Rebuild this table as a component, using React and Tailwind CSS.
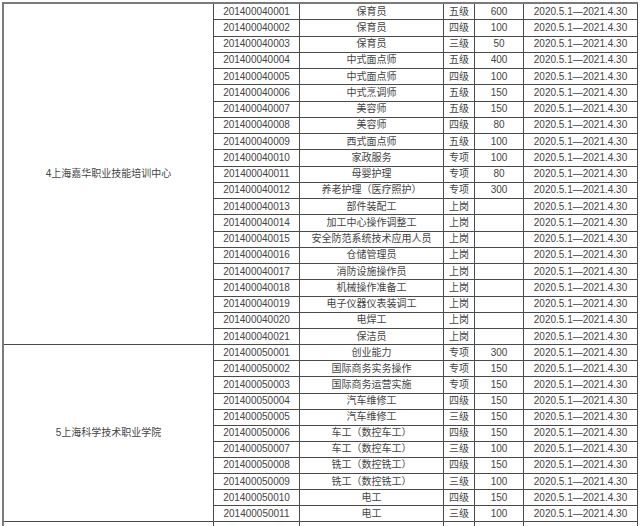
const s4 = [
  ["201400040001", "保育员", "五级", "600"],
  ["201400040002", "保育员", "四级", "100"],
  ["201400040003", "保育员", "三级", "50"],
  ["201400040004", "中式面点师", "五级", "400"],
  ["201400040005", "中式面点师", "四级", "100"],
  ["201400040006", "中式烹调师", "五级", "150"],
  ["201400040007", "美容师", "五级", "150"],
  ["201400040008", "美容师", "四级", "80"],
  ["201400040009", "西式面点师", "五级", "100"],
  ["201400040010", "家政服务", "专项", "100"],
  ["201400040011", "母婴护理", "专项", "80"],
  ["201400040012", "养老护理（医疗照护）", "专项", "300"],
  ["201400040013", "部件装配工", "上岗", ""],
  ["201400040014", "加工中心操作调整工", "上岗", ""],
  ["201400040015", "安全防范系统技术应用人员", "上岗", ""],
  ["201400040016", "仓储管理员", "上岗", ""],
  ["201400040017", "消防设施操作员", "上岗", ""],
  ["201400040018", "机械操作准备工", "上岗", ""],
  ["201400040019", "电子仪器仪表装调工", "上岗", ""],
  ["201400040020", "电焊工", "上岗", ""],
  ["201400040021", "保洁员", "上岗", ""],
];

const s5 = [
  ["201400050001", "创业能力", "专项", "300"],
  ["201400050002", "国际商务实务操作", "专项", "150"],
  ["201400050003", "国际商务运营实施", "专项", "150"],
  ["201400050004", "汽车维修工", "四级", "150"],
  ["201400050005", "汽车维修工", "三级", "150"],
  ["201400050006", "车工（数控车工）", "四级", "150"],
  ["201400050007", "车工（数控车工）", "三级", "100"],
  ["201400050008", "铣工（数控铣工）", "四级", "150"],
  ["201400050009", "铣工（数控铣工）", "三级", "100"],
  ["201400050010", "电工", "四级", "150"],
  ["201400050011", "电工", "三级", "100"],
];

const DATE = "2020.5.1—2021.4.30";

function Row({ r, h }) {
  return (
    <div className={`flex ${h} border-b border-[#4a4a4a]`}>
      <div className="w-[86px] shrink-0 border-r border-[#4a4a4a] flex items-center justify-center">{r[0]}</div>
      <div className="w-[144px] shrink-0 border-r border-[#4a4a4a] flex items-center justify-center whitespace-nowrap">{r[1]}</div>
      <div className="w-[31px] shrink-0 border-r border-[#4a4a4a] flex items-center justify-center">{r[2]}</div>
      <div className="w-[49px] shrink-0 border-r border-[#4a4a4a] flex items-center justify-center">{r[3]}</div>
      <div className="w-[114px] shrink-0 border-r border-[#4a4a4a] flex items-center justify-center whitespace-nowrap">{r[0] ? DATE : ""}</div>
    </div>
  );
}

function Section({ name, rows, h }) {
  return (
    <div className="flex">
      <div className="w-[210px] shrink-0 border-r border-b border-[#4a4a4a] flex items-center justify-center">
        {name}
      </div>
      <div className="flex flex-col">
        {rows.map((r, i) => (
          <Row key={r[0] || i} r={r} h={h} />
        ))}
      </div>
    </div>
  );
}

export default function App() {
  return (
    <div className="w-[640px] h-[526px] overflow-hidden bg-white">
      <div
        className="ml-[2px] mt-[2px] w-[636px] border-l-2 border-t-2 border-[#7a7a7a] text-[10px] leading-none text-[#444]"
        style={{ fontFamily: '"Liberation Sans", "Noto Sans CJK SC", sans-serif' }}
      >
        <Section name="4上海嘉华职业技能培训中心" rows={s4} h="h-[16.25px]" />
        <Section name="5上海科学技术职业学院" rows={s5} h="h-[16.1px]" />
        <Section name="" rows={[["", "", "", ""]]} h="h-[16.1px]" />
      </div>
    </div>
  );
}
